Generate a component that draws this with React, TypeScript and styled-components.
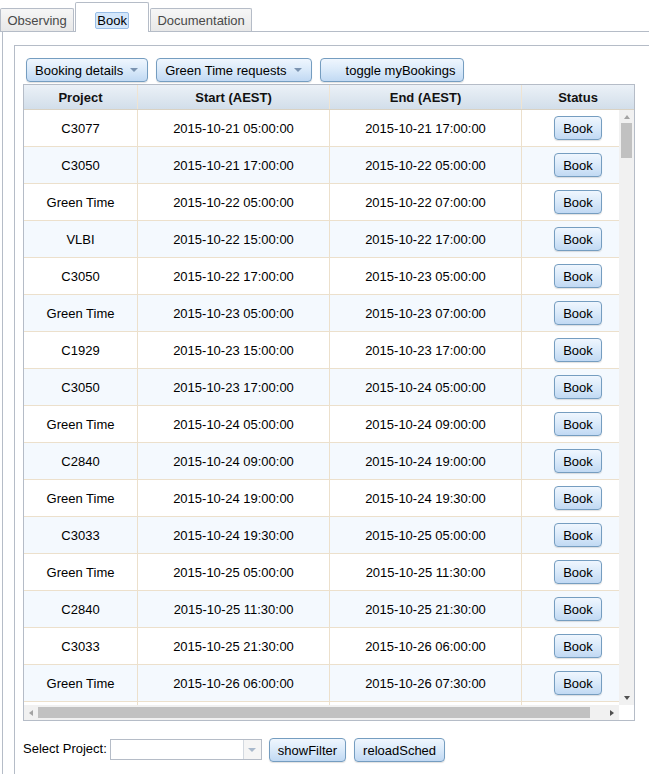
import React from 'react';
import styled, { createGlobalStyle } from 'styled-components';

const GlobalStyle = createGlobalStyle`
  html, body { margin: 0; padding: 0; background: #fff; overflow: hidden; }
  body { font-family: "Liberation Sans", Arial, sans-serif; font-size: 13px; color: #000; }
`;

const Page = styled.div`
  width: 700px;
  height: 774px;
  overflow: hidden;
`;

const TabStrip = styled.div`
  display: flex;
  align-items: flex-end;
  gap: 1px;
  height: 31px;
  border-bottom: 1px solid #b5bcc7;
`;

const Tab = styled.div<{ $active?: boolean }>`
  box-sizing: border-box;
  display: flex;
  align-items: center;
  height: ${p => (p.$active ? '30px' : '23px')};
  padding: ${p => (p.$active ? '6px 19px 0' : '0 6.5px')};
  margin-bottom: ${p => (p.$active ? '-1px' : '0')};
  border: 1px solid #b5bcc7;
  border-bottom: none;
  border-radius: 2px 2px 0 0;
  background: ${p => (p.$active ? '#fff' : 'linear-gradient(#f6f6f6, #e8e8e8)')};
  color: ${p => (p.$active ? '#000' : '#494949')};
`;

const FocusLabel = styled.span`
  padding: 0 1px;
  line-height: 15px;
  border: 1px solid #99bde6;
  border-radius: 2px;
  background: #d4e7fb;
`;

const Pane = styled.div`
  margin-left: 2px;
  border-left: 1px solid #b5bcc7;
  padding: 13px 0 0 11px;
  height: 760px;
`;

const InnerBox = styled.div`
  width: 660px;
  height: 800px;
  border: 1px solid #b5bcc7;
  padding: 8px;
`;

const Toolbar = styled.div`
  display: flex;
  gap: 8px;
  padding: 4px 0 2px 3px;
`;

const Button = styled.button<{ $iconGap?: boolean }>`
  box-sizing: border-box;
  height: 24px;
  display: inline-flex;
  align-items: center;
  gap: 7px;
  margin: 0;
  padding: 0 8px 0 ${p => (p.$iconGap ? '25px' : '8px')};
  border: 1px solid #759dc0;
  border-radius: 4px;
  background: linear-gradient(#eff6fe 0%, #dcebfa 45%, #c1d9f3 100%);
  box-shadow: 0 1px 1px rgba(0, 0, 0, 0.12);
  font: inherit;
  color: #000;
  white-space: nowrap;
`;

const DropArrow = styled.span`
  width: 0;
  height: 0;
  border-left: 4px solid transparent;
  border-right: 4px solid transparent;
  border-top: 4px solid #7b93b0;
  margin-right: 1px;
`;

const Grid = styled.div`
  box-sizing: border-box;
  width: 612px;
  height: 637px;
  border: 1px solid #b5bcc7;
  display: grid;
  grid-template-columns: 595px 15px;
  grid-template-rows: 25px 595px 15px;
`;

const columns = '114px 192px 192px 112px';

const HeaderRow = styled.div`
  grid-column: 1 / -1;
  display: grid;
  grid-template-columns: ${columns};
  border-bottom: 1px solid #d9d2c4;
  background: linear-gradient(#ebf1f7, #d2deea);
`;

const HeaderCell = styled.div<{ $last?: boolean }>`
  display: flex;
  align-items: center;
  justify-content: center;
  font-weight: bold;
  color: #111;
  border-right: ${p => (p.$last ? 'none' : '1px solid #efe4d2')};
`;

const Viewport = styled.div`
  overflow: hidden;
`;

const Table = styled.div`
  width: 610px;
`;

const Row = styled.div<{ $alt?: boolean }>`
  box-sizing: border-box;
  display: grid;
  grid-template-columns: ${columns};
  height: 37px;
  border-bottom: 1px solid #ece0cc;
  background: ${p => (p.$alt ? '#f4f9fe' : '#fff')};
`;

const Cell = styled.div<{ $last?: boolean }>`
  display: flex;
  align-items: center;
  justify-content: center;
  border-right: ${p => (p.$last ? 'none' : '1px solid #ece0cc')};
`;

const VScroll = styled.div`
  display: flex;
  flex-direction: column;
  background: #f1f1f1;
`;

const HScroll = styled.div`
  display: flex;
  background: #f1f1f1;
`;

const Corner = styled.div`
  background: #fff;
`;

const ArrowBox = styled.div<{ $size: number }>`
  flex: 0 0 ${p => p.$size}px;
  display: flex;
  align-items: center;
  justify-content: center;
`;

const Tri = styled.span<{ $dir: 'up' | 'down' | 'left' | 'right'; $dark?: boolean }>`
  width: 0;
  height: 0;
  ${p => {
    const c = p.$dark ? '#505050' : '#a3a3a3';
    switch (p.$dir) {
      case 'up':
        return `border-left:3.5px solid transparent;border-right:3.5px solid transparent;border-bottom:4px solid ${c};`;
      case 'down':
        return `border-left:3.5px solid transparent;border-right:3.5px solid transparent;border-top:4px solid ${c};`;
      case 'left':
        return `border-top:3.5px solid transparent;border-bottom:3.5px solid transparent;border-right:4px solid ${c};`;
      default:
        return `border-top:3.5px solid transparent;border-bottom:3.5px solid transparent;border-left:4px solid ${c};`;
    }
  }}
`;

const VThumb = styled.div`
  height: 35px;
  margin: 0 2px 0 2px;
  background: #c1c1c1;
`;

const HThumb = styled.div`
  width: 552px;
  margin: 2px 0;
  background: #c1c1c1;
`;

const Spacer = styled.div`
  flex: 1;
`;

const BottomBar = styled.div`
  display: flex;
  align-items: center;
  margin-top: 17px;
  height: 24px;
`;

const Label = styled.span`
  margin-right: 3px;
  padding-bottom: 3px;
`;

const Combo = styled.div`
  box-sizing: border-box;
  display: flex;
  width: 152px;
  height: 21px;
  border: 1px solid #b5bcc7;
  background: #fff;
  margin-right: 7px;
  margin-bottom: 1px;
`;

const ComboInput = styled.div`
  flex: 1;
`;

const ComboArrow = styled.div`
  width: 17px;
  border-left: 1px solid #d3d9e0;
  background: #f5f5f5;
  display: flex;
  align-items: center;
  justify-content: center;
`;

const ComboTri = styled.span`
  width: 0;
  height: 0;
  border-left: 4px solid transparent;
  border-right: 4px solid transparent;
  border-top: 4px solid #a9b9cc;
`;

const Buttons = styled.div`
  display: flex;
  gap: 8px;
`;

type Booking = [string, string, string];

const rows: Booking[] = [
  ['C3077', '2015-10-21 05:00:00', '2015-10-21 17:00:00'],
  ['C3050', '2015-10-21 17:00:00', '2015-10-22 05:00:00'],
  ['Green Time', '2015-10-22 05:00:00', '2015-10-22 07:00:00'],
  ['VLBI', '2015-10-22 15:00:00', '2015-10-22 17:00:00'],
  ['C3050', '2015-10-22 17:00:00', '2015-10-23 05:00:00'],
  ['Green Time', '2015-10-23 05:00:00', '2015-10-23 07:00:00'],
  ['C1929', '2015-10-23 15:00:00', '2015-10-23 17:00:00'],
  ['C3050', '2015-10-23 17:00:00', '2015-10-24 05:00:00'],
  ['Green Time', '2015-10-24 05:00:00', '2015-10-24 09:00:00'],
  ['C2840', '2015-10-24 09:00:00', '2015-10-24 19:00:00'],
  ['Green Time', '2015-10-24 19:00:00', '2015-10-24 19:30:00'],
  ['C3033', '2015-10-24 19:30:00', '2015-10-25 05:00:00'],
  ['Green Time', '2015-10-25 05:00:00', '2015-10-25 11:30:00'],
  ['C2840', '2015-10-25 11:30:00', '2015-10-25 21:30:00'],
  ['C3033', '2015-10-25 21:30:00', '2015-10-26 06:00:00'],
  ['Green Time', '2015-10-26 06:00:00', '2015-10-26 07:30:00'],
];

export default function App() {
  return (
    <Page>
      <GlobalStyle />
      <TabStrip>
        <Tab>Observing</Tab>
        <Tab $active>
          <FocusLabel>Book</FocusLabel>
        </Tab>
        <Tab>Documentation</Tab>
      </TabStrip>
      <Pane>
        <InnerBox>
          <Toolbar>
            <Button>
              Booking details
              <DropArrow />
            </Button>
            <Button>
              Green Time requests
              <DropArrow />
            </Button>
            <Button $iconGap>toggle myBookings</Button>
          </Toolbar>
          <Grid>
            <HeaderRow>
              <HeaderCell>Project</HeaderCell>
              <HeaderCell>Start (AEST)</HeaderCell>
              <HeaderCell>End (AEST)</HeaderCell>
              <HeaderCell $last>Status</HeaderCell>
            </HeaderRow>
            <Viewport>
              <Table>
                {rows.map((r, i) => (
                  <Row key={i} $alt={i % 2 === 1}>
                    <Cell>{r[0]}</Cell>
                    <Cell>{r[1]}</Cell>
                    <Cell>{r[2]}</Cell>
                    <Cell $last>
                      <Button>Book</Button>
                    </Cell>
                  </Row>
                ))}
                <Row>
                  <Cell />
                  <Cell />
                  <Cell />
                  <Cell $last />
                </Row>
              </Table>
            </Viewport>
            <VScroll>
              <ArrowBox $size={13}>
                <Tri $dir="up" />
              </ArrowBox>
              <VThumb />
              <Spacer />
              <ArrowBox $size={14}>
                <Tri $dir="down" $dark />
              </ArrowBox>
            </VScroll>
            <HScroll>
              <ArrowBox $size={14}>
                <Tri $dir="left" />
              </ArrowBox>
              <HThumb />
              <Spacer />
              <ArrowBox $size={14}>
                <Tri $dir="right" $dark />
              </ArrowBox>
            </HScroll>
            <Corner />
          </Grid>
          <BottomBar>
            <Label>Select Project:</Label>
            <Combo>
              <ComboInput />
              <ComboArrow>
                <ComboTri />
              </ComboArrow>
            </Combo>
            <Buttons>
              <Button>showFilter</Button>
              <Button>reloadSched</Button>
            </Buttons>
          </BottomBar>
        </InnerBox>
      </Pane>
    </Page>
  );
}
